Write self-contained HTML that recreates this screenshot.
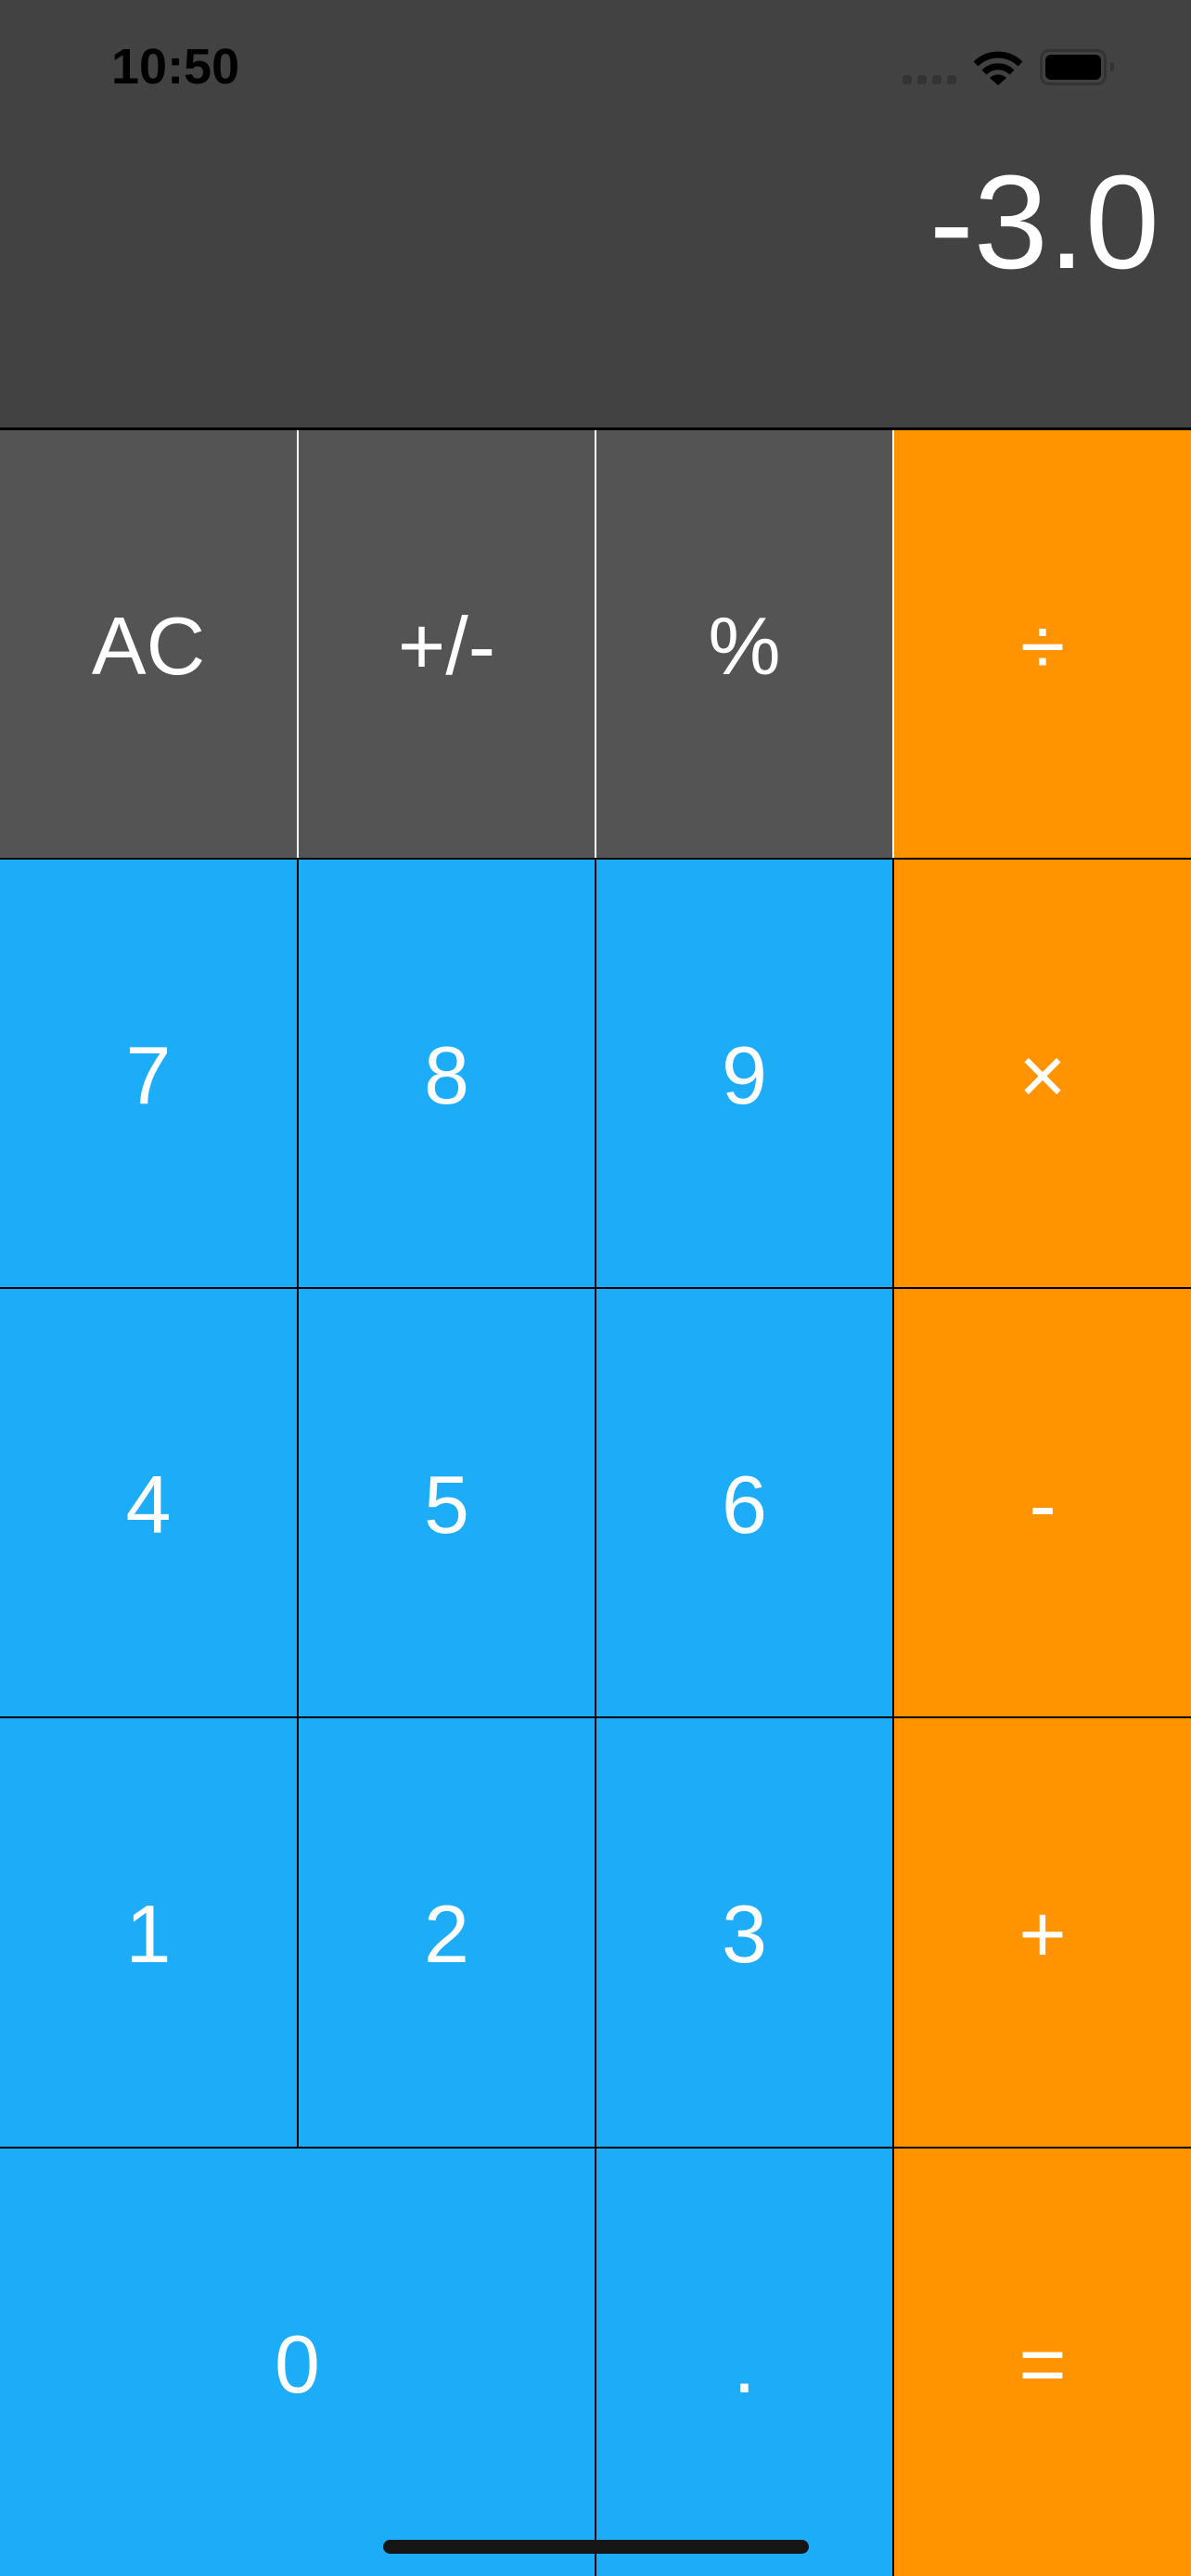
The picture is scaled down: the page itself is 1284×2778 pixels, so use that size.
<!DOCTYPE html>
<html><head><meta charset="utf-8"><style>
html,body{margin:0;padding:0}
body{width:1284px;height:2778px;position:relative;overflow:hidden;background:#000;font-family:"Liberation Sans",sans-serif}
.hdr{position:absolute;left:0;top:0;width:1284px;height:461px;background:#424242}
.time{position:absolute;left:120px;top:41px;font-size:54px;font-weight:bold;color:#000;letter-spacing:0}
.disp{position:absolute;right:34px;top:168px;font-size:144px;color:#fff;font-weight:300;line-height:1}
.k{position:absolute;display:flex;align-items:center;justify-content:center;color:#fff;font-size:88px;padding-top:4px;box-sizing:border-box}
.g{background:#545454}.b{background:#1DADF8}.o{background:#FF9300}
.home{position:absolute;left:413px;top:2739px;width:459px;height:15px;border-radius:8px;background:#161616}
</style></head><body>
<div class="hdr">
<div class="time">10:50</div>
<div style="position:absolute;left:973px;top:81px;width:10px;height:10px;border-radius:3px;background:#333"></div>
<div style="position:absolute;left:989px;top:81px;width:10px;height:10px;border-radius:3px;background:#333"></div>
<div style="position:absolute;left:1005px;top:81px;width:10px;height:10px;border-radius:3px;background:#333"></div>
<div style="position:absolute;left:1021px;top:81px;width:10px;height:10px;border-radius:3px;background:#333"></div>
<svg style="position:absolute;left:1048px;top:52px" width="56" height="42" viewBox="0 0 56 42">
<path d="M4 17 A34 34 0 0 1 52 17" fill="none" stroke="#000" stroke-width="7"/>
<path d="M13 26 A21 21 0 0 1 43 26" fill="none" stroke="#000" stroke-width="7"/>
<path d="M28 40 L19 32 A13 13 0 0 1 37 32 Z" fill="#000"/>
</svg>
<div style="position:absolute;left:1121px;top:53px;width:66px;height:33px;border:3px solid #333;border-radius:10px"></div>
<div style="position:absolute;left:1127px;top:59px;width:60px;height:27px;border-radius:6px;background:#000"></div>
<div style="position:absolute;left:1197px;top:67px;width:4px;height:10px;border-radius:0 3px 3px 0;background:#333"></div>
<div class="disp">-3.0</div>
</div>
<div class="k g" style="left:0;top:464px;width:320px;height:461px">AC</div>
<div class="k g" style="left:322px;top:464px;width:319px;height:461px">+/-</div>
<div class="k g" style="left:643px;top:464px;width:319px;height:461px">%</div>
<div class="k o" style="left:964px;top:464px;width:320px;height:461px">÷</div>
<div style="position:absolute;left:320px;top:464px;width:2px;height:461px;background:#fff"></div>
<div style="position:absolute;left:641px;top:464px;width:2px;height:461px;background:#fff"></div>
<div style="position:absolute;left:962px;top:464px;width:2px;height:461px;background:#fff"></div>

<div class="k b" style="left:0;top:927px;width:320px;height:461px">7</div>
<div class="k b" style="left:322px;top:927px;width:319px;height:461px">8</div>
<div class="k b" style="left:643px;top:927px;width:319px;height:461px">9</div>
<div class="k o" style="left:964px;top:927px;width:320px;height:461px">×</div>

<div class="k b" style="left:0;top:1390px;width:320px;height:461px">4</div>
<div class="k b" style="left:322px;top:1390px;width:319px;height:461px">5</div>
<div class="k b" style="left:643px;top:1390px;width:319px;height:461px">6</div>
<div class="k o" style="left:964px;top:1390px;width:320px;height:461px">-</div>

<div class="k b" style="left:0;top:1853px;width:320px;height:462px">1</div>
<div class="k b" style="left:322px;top:1853px;width:319px;height:462px">2</div>
<div class="k b" style="left:643px;top:1853px;width:319px;height:462px">3</div>
<div class="k o" style="left:964px;top:1853px;width:320px;height:462px">+</div>

<div class="k b" style="left:0;top:2317px;width:641px;height:461px">0</div>
<div class="k b" style="left:643px;top:2317px;width:319px;height:461px">.</div>
<div class="k o" style="left:964px;top:2317px;width:320px;height:461px">=</div>
<div class="home"></div>
</body></html>
